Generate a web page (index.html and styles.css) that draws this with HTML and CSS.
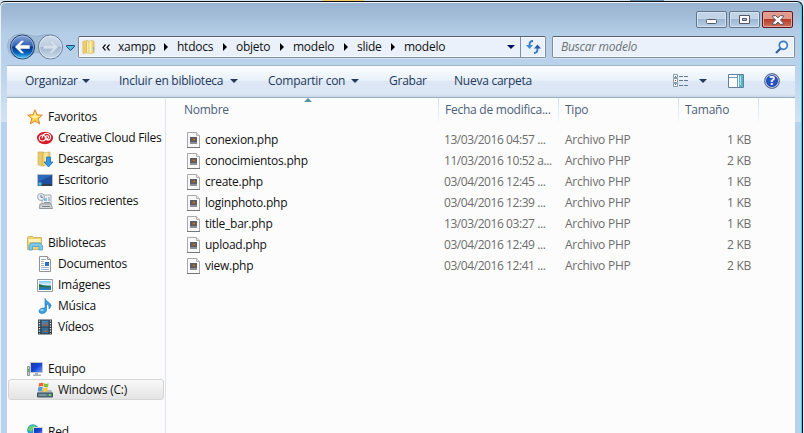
FILE: index.html
```
<!DOCTYPE html>
<html lang="es">
<head>
<meta charset="utf-8">
<title>modelo</title>
<link rel="stylesheet" href="styles.css">
</head>
<body>
<svg class="defs" width="0" height="0">
  <defs>
    <linearGradient id="gold" x1="0" x2="1"><stop offset="0" stop-color="#e3bd55"/><stop offset=".5" stop-color="#fcefad"/><stop offset="1" stop-color="#e0bd5c"/></linearGradient>
    <linearGradient id="sea" x2="0" y2="1"><stop offset="0" stop-color="#80c8f2"/><stop offset=".45" stop-color="#e0f3f8"/><stop offset=".55" stop-color="#2b8b91"/><stop offset="1" stop-color="#2476b9"/></linearGradient>
    <linearGradient id="screen" x2="1" y2="1"><stop offset="0" stop-color="#16399b"/><stop offset=".5" stop-color="#1643d8"/><stop offset="1" stop-color="#6da6f2"/></linearGradient>
    <linearGradient id="back" x2="0" y2="1"><stop offset="0" stop-color="#8ba7d8"/><stop offset=".45" stop-color="#3462b4"/><stop offset=".5" stop-color="#07388e"/><stop offset=".75" stop-color="#0862bd"/><stop offset="1" stop-color="#47d9fa"/></linearGradient>
    <linearGradient id="fwd" x2="0" y2="1"><stop offset="0" stop-color="#d2deeb"/><stop offset=".48" stop-color="#bccddf"/><stop offset=".52" stop-color="#a3b8ce"/><stop offset="1" stop-color="#ccdeed"/></linearGradient>
    <symbol id="folder" viewBox="0 0 16 16"><path d="M2 2l5-1v13l-5 1z" fill="#edcd6c" stroke="#d5b154" stroke-width=".6"/><path d="M6 2l6-1 2 1v12l-4 1-4-1z" fill="url(#gold)" stroke="#d5b154" stroke-width=".6"/><path d="M7 2v12" stroke="#fff4bf"/><path d="M13.5 8v4" stroke="#69b8d2"/></symbol>
    <symbol id="php" viewBox="0 0 13 16"><path d="M.5.5h9l3 3v12H.5z" fill="#f8f8f8" stroke="#a9a9a9"/><path d="M0 15.500h13" stroke="#777"/><path d="M9.500.5v3h3" fill="#e8e8e8" stroke="#b4b4b4"/><path d="M3 5h7v7H3z" fill="#8b8f93"/><path d="M3 5h7v5H3z" fill="#5b5f65"/><path d="M5 6h3v3H5z" fill="#7d5c40"/><path d="M6 7h2v1H6z" fill="#c0782f"/></symbol>
    <symbol id="star" viewBox="0 0 16 16"><path d="M8 .8l2.100 5 5.200.3-4 3.500 1.400 5.300L8 12l-4.700 2.900 1.400-5.300-4-3.500 5.200-.3z" fill="#ffd045" stroke="#df8430" stroke-width="1"/><path d="M8 3l1.300 3.800 3.500.3-5 3-4.500-3 3.300-.3z" fill="#fff0a0"/></symbol>
    <symbol id="cloud" viewBox="0 0 16 16"><ellipse cx="8" cy="8" rx="8" ry="6.200" fill="#d91925"/><path d="M8.500 9.500C5.500 12.500 2 10.500 2.200 8c.2-3 4-3.800 5.800-1.600l3 3.200M5 8.300C5.500 3 10.500 1.800 13 5c2 3-.8 6.200-3.700 4.600-1.800-1.200-1.500-3.800.8-3.900 1.500 0 2 1.600 1 2.600" fill="none" stroke="#fff" stroke-width="1.100"/></symbol>
    <symbol id="downloads" viewBox="0 0 16 16"><path d="M1 1h6v14l-6-1z" fill="#ebca6c" stroke="#cca748" stroke-width=".6"/><path d="M5 2l8-1v12l-8 2z" fill="url(#gold)" stroke="#d0ad53" stroke-width=".6"/><path d="M9.500 6h4v5H16l-4.500 5L7 11h2.500z" fill="#3098e4" stroke="#1767a7" stroke-width=".7"/></symbol>
    <symbol id="desktop" viewBox="0 0 16 16"><path d="M.5 2.500h15v11H.5z" fill="#1f4f9c" stroke="#b7bdc5"/><path d="M1 3h14L1 10z" fill="#2d6abc"/><path d="M1 12h14v2H1z" fill="#343c48"/><circle cx="3" cy="12" r="1.900" fill="#3ab3e8"/><path d="M2 11h1v1H2z" fill="#f68a44"/></symbol>
    <symbol id="recent" viewBox="0 0 16 16"><path d="M5 2h9v9H5z" fill="#edf1f5" stroke="#a5abb0"/><path d="M7 5h3v3H7z" fill="#7fc1e8"/><path d="M11 5h2M11 7h2M7 9.500h6" stroke="#8a96a6"/><path d="M3 11h11l1.500 4.500h-13z" fill="#d5d7d9" stroke="#90969a"/><path d="M5 13.500h8" stroke="#797f84"/><circle cx="4" cy="4" r="3.500" fill="#eaf0f5" stroke="#9da5ac"/><path d="M4 2v2.300h2" fill="none" stroke="#5c7290"/></symbol>
    <symbol id="libraries" viewBox="0 0 16 16"><path d="M.5 2.500l1-1h4l1 1h8v12H.5z" fill="#eed278" stroke="#c7a84c" stroke-width=".8"/><path d="M1.500 4h12v3h-12z" fill="#fff2b5"/><path d="M2 15V10.500l2-2.500h9l2.500 2.500V15h-3.500v-3.500H5.500V15z" fill="#7dc8ea" stroke="#4a9ecb" stroke-width=".8"/></symbol>
    <symbol id="document" viewBox="0 0 16 16"><path d="M2.500.5h8l3 3v12h-11z" fill="#fff" stroke="#8f9499"/><path d="M10.500.5v3h3" fill="#ddd" stroke="#999"/><path d="M4 3.500h5M4 5.500h3M4 7.500h3M4 9.500h3M4 11.500h8M4 13.500h8" stroke="#a3b3cd"/><path d="M8 6h4v4H8z" fill="#2b6fc2"/></symbol>
    <symbol id="image" viewBox="0 0 16 16"><path d="M.5 2.500h15v12H.5z" fill="#fff" stroke="#949a9f"/><path d="M2 4h12v9H2z" fill="url(#sea)"/><path d="M2 7l5 1.500 7 1v1L2 10z" fill="#256c4d"/></symbol>
    <symbol id="music" viewBox="0 0 16 16"><path d="M8 .5c1 3.500 5.500 3.500 6 7-.2 1.500-1 2.500-2 3.500.4-3-.5-4.500-2.500-5V12c0 2-2 3.500-4.500 3.500-2 0-3.200-1-3-2.500.3-2 3-3.500 6-2.800z" fill="#37a2e5" stroke="#176fb5" stroke-width=".6"/><ellipse cx="5" cy="12" rx="1.800" ry="1" fill="#95d9fa"/></symbol>
    <symbol id="video" viewBox="0 0 16 16"><path d="M1 .5h14v15H1z" fill="#333a40"/><path d="M4.500 1.500h7v6h-7z" fill="#3c85b6"/><path d="M4.500 8.500h7v6h-7z" fill="#2b6e9f"/><path d="M6 6l3-3 2 4H6zM6 13l3-3 2 3z" fill="#9b6049"/><path d="M2.500 1.500v13M13.500 1.500v13" stroke="#e5eaee" stroke-width="1.400" stroke-dasharray="1.200 1.300"/></symbol>
    <symbol id="computer" viewBox="0 0 16 16"><path d="M.5 5.500h2v9h-2z" fill="#cbd4cb" stroke="#8d9690"/><path d="M1 8h1v3H1z" fill="#47b944"/><path d="M3.500 1.500h12v10h-12z" fill="url(#screen)" stroke="#c0c6cc"/><path d="M8 12h3v1.500h3V15H6v-1.500h2z" fill="#a9b0b6"/></symbol>
    <symbol id="drive" viewBox="0 0 16 16"><path d="M2 8h12l2 3v4H0v-4z" fill="#a9b9c3"/><path d="M.5 11h15v4H.5z" fill="#5e7985" stroke="#40545e"/><path d="M2 13h7" stroke="#92a9b3"/><path d="M12 12h2v2h-2z" fill="#5cdf65"/><path d="M2 1.500q2-1.500 4.500-.4L6 4.500Q4 3.500 1.500 5z" fill="#ee6331"/><path d="M7 1.300q2 1.200 4.500 0L11 5q-2 1-4.500-.2z" fill="#84bd38"/><path d="M1.300 5.600q2-1.300 4.500-.3L5 9Q3 8 .8 9z" fill="#4b9be0"/><path d="M6.300 5.600q2 1.200 4.500 0L10 9.500q-2 1-4.300-.2z" fill="#ffc52b"/></symbol>
    <symbol id="network" viewBox="0 0 16 16"><circle cx="6" cy="6" r="5.800" fill="#269fdb"/><path d="M2 3q4-3 7-1L6 5 4 8 1 6z" fill="#6ad265"/><path d="M6.500 3.500h9v8h-9z" fill="url(#screen)" stroke="#cbd1dc"/><path d="M9 12h4v2H9z" fill="#999"/></symbol>
  </defs>
</svg>

<div class="desktop"><i class="tab"></i><i class="text-rest"></i></div>
<div class="window">
  <div class="titlebar">
    <div class="controls">
      <span class="control"><svg width="12" height="6"><rect x=".5" y=".5" width="10" height="4" rx="1" fill="#fff" stroke="#535666"/></svg></span>
      <span class="control restore"><svg width="11" height="9"><path d="M.5.5h10v8H.5z" fill="#fff" stroke="#535666"/><path d="M3.500 3.500h4v2h-4z" fill="#a9bfd7" stroke="#535666"/></svg></span>
      <span class="control close"><svg width="12" height="10"><path d="M.7.700h3L6 2.800 8.300.700h3v1.500L8.300 5l3 2.800v1.500h-3L6 7.200 3.700 9.300h-3V7.800l3-2.800-3-2.800z" fill="#fff" stroke="#535666"/></svg></span>
    </div>
  </div>
  <div class="nav">
    <svg class="history" width="70" height="30" viewBox="0 0 70 30">
      <path d="M13 2c10 0 12 3 18 2 6-1 9-2 14-1 8 2 11 9 8 16-3 8-12 9-19 3-2-2-6-2-8 0C18 29 3 27 1 17-1 9 5 2 13 2z" fill="#9eb7d1" stroke="#8fa9c4" opacity=".75"/>
      <circle cx="15.500" cy="15" r="12" fill="url(#back)" stroke="#283f6c"/><circle cx="15.500" cy="15" r="11" fill="none" stroke="#adc7e7" stroke-opacity=".7"/>
      <path d="M8 15l6.300-6.300h2.800l-4.100 4.600h9.700v3.500h-9.700l4.100 4.500h-2.800z" fill="#fff"/>
      <circle cx="43.500" cy="15" r="12" fill="url(#fwd)" stroke="#687f97"/><circle cx="43.500" cy="15" r="11" fill="none" stroke="#e3edf7" stroke-opacity=".7"/>
      <path d="M51 15l-6.300-6.300h-2.800l4.100 4.600h-9.700v3.500H46l-4.100 4.500h2.800z" fill="#d6e1ec" stroke="#b5c4d5" stroke-width=".5"/>
      <path d="M59.500 13.500h8v1l-4 4-4-4z" fill="#4dbbe0" stroke="#244b78"/>
    </svg>
    <div class="address">
      <svg class="place" width="15" height="16"><use href="#folder"/></svg>
      <svg class="more" width="8" height="7" viewBox="0 0 8 7"><path d="M3.500.5l-2.500 3 2.500 3M7.500.5L5 3.500l2.500 3" fill="none" stroke="#111" stroke-width="1.200"/></svg>
      <span class="crumb c1">xampp</span><i class="sep"></i>
      <span class="crumb c2">htdocs</span><i class="sep"></i>
      <span class="crumb c3">objeto</span><i class="sep"></i>
      <span class="crumb c4">modelo</span><i class="sep"></i>
      <span class="crumb c5">slide</span><i class="sep"></i>
      <span class="crumb c6">modelo</span><i class="caret navy"></i>
      <span class="refresh"><svg width="15" height="14" viewBox="0 0 15 14"><path d="M7 1Q3.500 1 3.500 5v1M8 13q3.500 0 3.500-4V7" fill="none" stroke="#2f79c5" stroke-width="1.800"/><path d="M0 5h7L3.500 9z" fill="#3c8bd0"/><path d="M8 8.500h7l-3.500-4z" fill="#245eaa"/></svg></span>
    </div>
    <div class="search"><span>Buscar modelo</span><svg width="14" height="14" viewBox="0 0 14 14"><path d="M1 13l5-5" stroke="#38629f" stroke-width="2.300"/><circle cx="8.300" cy="5.300" r="4" fill="#f3f9ff" stroke="#3b7cc2" stroke-width="1.700"/></svg></div>
  </div>
  <div class="toolbar">
    <span class="tool t1">Organizar<i class="caret"></i></span>
    <span class="tool t2">Incluir en biblioteca<i class="caret"></i></span>
    <span class="tool t3">Compartir con<i class="caret"></i></span>
    <span class="tool t4">Grabar</span>
    <span class="tool t5">Nueva carpeta</span>
    <svg class="view" width="16" height="14" viewBox="0 0 16 14"><path d="M.5.500h4v3h-4zM.5 4.500h4v4h-4zM.5 9.500h4v3h-4z" fill="#fff" stroke="#8b98a8"/><path d="M2 2h1v1H2zM2 10h1v1H2z" fill="#357ac3"/><path d="M2 6h1v1H2z" fill="#d4391f"/><path d="M6 2.500h10M6 6.500h10M6 11.500h10" stroke="#65788e" stroke-dasharray="4 1"/></svg>
    <i class="caret"></i>
    <svg class="pane" width="16" height="14" viewBox="0 0 16 14"><path d="M.5.500h15v13H.5z" fill="#fff" stroke="#61809f"/><path d="M1 3.500h9M9.500 1v12" stroke="#7696b3"/><path d="M11 1h4v12h-4z" fill="#55b5ca"/><path d="M12 2h1v9h-1z" fill="#b1e5ed"/></svg>
    <span class="help">?</span>
  </div>
  <div class="body">
    <nav class="sidebar">
      <div class="group">
        <div class="item root"><svg><use href="#star"/></svg><span>Favoritos</span></div>
        <div class="item"><svg><use href="#cloud"/></svg><span class="creative">Creative Cloud Files</span></div>
        <div class="item"><svg><use href="#downloads"/></svg><span>Descargas</span></div>
        <div class="item"><svg><use href="#desktop"/></svg><span>Escritorio</span></div>
        <div class="item"><svg><use href="#recent"/></svg><span>Sitios recientes</span></div>
      </div>
      <div class="group">
        <div class="item root"><svg><use href="#libraries"/></svg><span>Bibliotecas</span></div>
        <div class="item"><svg><use href="#document"/></svg><span>Documentos</span></div>
        <div class="item"><svg><use href="#image"/></svg><span>Imágenes</span></div>
        <div class="item"><svg><use href="#music"/></svg><span>Música</span></div>
        <div class="item"><svg><use href="#video"/></svg><span>Vídeos</span></div>
      </div>
      <div class="group">
        <div class="item root"><svg><use href="#computer"/></svg><span>Equipo</span></div>
        <div class="item selected"><svg><use href="#drive"/></svg><span>Windows (C:)</span></div>
      </div>
      <div class="group">
        <div class="item root"><svg><use href="#network"/></svg><span>Red</span></div>
      </div>
    </nav>
    <main class="files">
      <div class="head"><span>Nombre<i class="sort"></i></span><span>Fecha de modifica...</span><span>Tipo</span><span>Tamaño</span></div>
      <div class="row"><span class="name"><svg><use href="#php"/></svg>conexion.php</span><span class="date">13/03/2016 04:57 ...</span><span>Archivo PHP</span><span class="size">1 KB</span></div>
      <div class="row"><span class="name"><svg><use href="#php"/></svg>conocimientos.php</span><span class="date">11/03/2016 10:52 a...</span><span>Archivo PHP</span><span class="size">2 KB</span></div>
      <div class="row"><span class="name"><svg><use href="#php"/></svg>create.php</span><span class="date">03/04/2016 12:45 ...</span><span>Archivo PHP</span><span class="size">1 KB</span></div>
      <div class="row"><span class="name"><svg><use href="#php"/></svg>loginphoto.php</span><span class="date">03/04/2016 12:39 ...</span><span>Archivo PHP</span><span class="size">1 KB</span></div>
      <div class="row"><span class="name"><svg><use href="#php"/></svg>title_bar.php</span><span class="date">13/03/2016 03:27 ...</span><span>Archivo PHP</span><span class="size">1 KB</span></div>
      <div class="row"><span class="name"><svg><use href="#php"/></svg>upload.php</span><span class="date">03/04/2016 12:49 ...</span><span>Archivo PHP</span><span class="size">2 KB</span></div>
      <div class="row"><span class="name"><svg><use href="#php"/></svg>view.php</span><span class="date">03/04/2016 12:41 ...</span><span>Archivo PHP</span><span class="size">2 KB</span></div>
    </main>
  </div>
</div>
</body>
</html>
```
FILE: styles.css
```
* { box-sizing: border-box; }
html, body { margin: 0; height: 433px; overflow: hidden; }
body { background: #dce8f3; font: 12px/20px "Open Sans", "Noto Sans", sans-serif; letter-spacing: -.25px; white-space: nowrap; }
svg { display: block; flex: none; }
i { display: block; flex: none; }
.defs { position: absolute; }
.desktop { height: 1px; display: flex; background: #d3e2ef; }
.tab { width: 42px; margin-left: 322px; background: #f5cb72; }
.text-rest { width: 34px; margin-left: 266px; background: #7094b8; }

.window { width: 803px; height: 440px; border: solid #111; border-width: 1px 1px 0 0; border-radius: 5px 6px 0 0; padding: 0 6px 0 7px; box-shadow: inset -1px 0 #37c7ee, inset 1px 1px #eaf3fb;
  background: linear-gradient(#98b3cf 0, #a3bdd9 14px, #b5cee8 32px, #b9d1ea 60px, #d3e2f3 120px, #b9d1ea 120px); }
.titlebar { height: 32px; padding-top: 9px; }
.controls { display: flex; gap: 2px; justify-content: flex-end; padding-right: 3px; }
.control { width: 31px; height: 17px; display: flex; align-items: center; justify-content: center; border: 1px solid #60748c; border-radius: 2px; padding-top: 4px; box-shadow: inset 0 0 0 1px #d5e3f1; background: linear-gradient(#c1d3e7 45%, #9eb7d2 50%, #b7cfe7); }
.restore, .close { padding-top: 0; }
.close { border-color: #5b1b24; box-shadow: inset 0 0 0 1px #e5a59b; background: linear-gradient(#e39a8d 45%, #b93b26 50%, #cf745c); }

.nav { height: 31px; display: flex; align-items: flex-start; }
.history { margin: -2px 1px 0 0; width: 70px; }
.address, .search { height: 22px; margin-top: 2px; display: flex; align-items: center; border: 1px solid #818f9d; border-top-color: #59626c; border-radius: 2px; background: #eaf1fa; box-shadow: 0 1px #d3e2f1, inset 0 0 0 1px #f6faff; color: #111; }
.address { width: 468px; padding-left: 2px; }
.place { margin-right: 6px; }
.more { margin-right: 8px; }
.crumb { flex: none; }
.c1 { width: 46px; } .c2 { width: 46px; } .c3 { width: 44px; } .c4 { width: 51px; } .c5 { width: 34px; } .c6 { width: 103px; }
.sep { margin-right: 9px; border: solid transparent; border-width: 4px 0 4px 4px; border-left-color: #000; }
.caret { border: solid transparent; border-width: 4px 4px 0; border-top-color: #24395f; }
.navy { border-top-color: #001066; }
.refresh { width: 25px; height: 20px; margin-left: auto; display: flex; align-items: center; justify-content: center; border-left: 1px solid #818f9d; }
.search { width: 243px; margin-left: 6px; padding: 0 5px 0 8px; justify-content: space-between; font-style: italic; color: #6d7178; }

.toolbar { height: 33px; width: 788px; display: flex; align-items: center; padding: 0 0 1px 18px; color: #1e395b; border-top: 1px solid #9fb4cc; border-bottom: 1px solid #9aaec6; background: linear-gradient(#fbfdff 0, #e9f1fa 46%, #dce6f4 50%, #dde8f6 90%, #c6d6e7); }
.tool { display: flex; align-items: center; justify-content: space-between; flex: none; }
.t1 { width: 65px; margin-right: 29px; } .t2 { width: 119px; margin-right: 30px; } .t3 { width: 91px; margin-right: 30px; } .t4 { width: 65px; } .t5 { width: 78px; }
.view { margin: 0 10px 0 141px; }
.pane { margin: 0 20px 0 21px; }
.help { width: 16px; height: 16px; border: 1px solid #66738d; border-radius: 50%; box-shadow: inset 0 0 0 1px #c6cfe4; background: radial-gradient(#2e65da, #172f91); color: #fff; font-weight: 700; line-height: 14px; text-align: center; }

.body { width: 788px; height: 336px; display: flex; background: #fcfcfc; }
.sidebar { width: 159px; flex: none; border-right: 1px solid #d9e5f3; padding-top: 8px; }
.group { margin-bottom: 21px; }
.item { height: 21px; display: flex; align-items: center; gap: 5px; padding-left: 30px; color: #111; }
.item svg { width: 16px; height: 16px; }
.root { padding-left: 20px; gap: 5px; }
.creative { letter-spacing: -.3px; }
.selected { margin: 0 1px; padding-left: 28px; border: 1px solid #d5d5d5; border-radius: 3px; background: linear-gradient(#f8f8f8, #e4e4e4); }

.files { width: 629px; }
.head { height: 24px; display: grid; grid-template-columns: 273px 120px 120px 80px; color: #4c607a; margin-bottom: 7px; }
.head span { position: relative; padding: 2px 0 0 6px; border-right: 1px solid; border-image: linear-gradient(#cbdff2, #f5f9fc) 1; }
.head span:first-child { padding-left: 18px; }
.sort { position: absolute; top: 0; left: 138px; border: solid transparent; border-width: 0 4px 4px; border-bottom-color: #5b91ad; }
.row { height: 21px; display: grid; grid-template-columns: 278px 121px 120px 66px; align-items: center; color: #6d6d6d; }
.name { display: flex; align-items: center; gap: 5px; padding-left: 21px; color: #111; }
.name svg { width: 13px; height: 16px; }
.date { letter-spacing: -.43px; }
.size { text-align: right; }
```
